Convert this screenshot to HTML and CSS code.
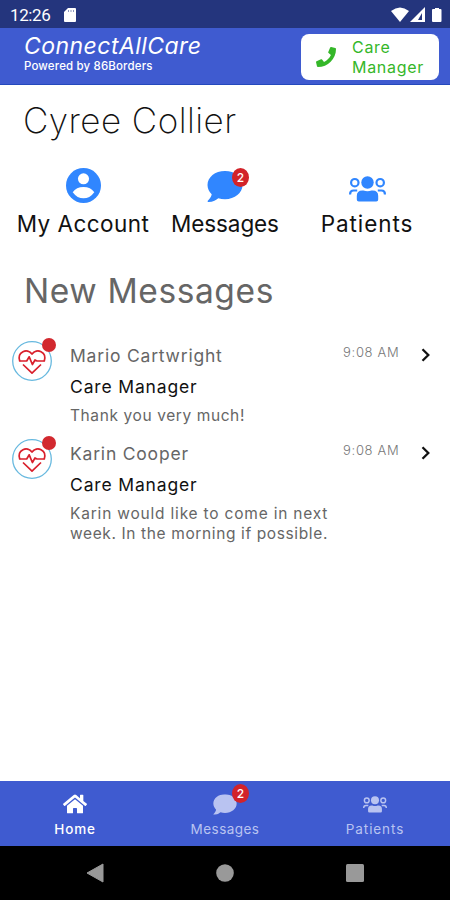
FILE: index.html
```html
<!DOCTYPE html>
<html lang="en">
<head>
<meta charset="utf-8">
<title>ConnectAllCare</title>
<link rel="stylesheet" href="styles.css">
</head>
<body>
<svg class="defs" aria-hidden="true">
  <symbol id="people" viewBox="0 0 37 26">
    <circle cx="18.5" cy="6.5" r="6.2"/>
    <path d="M7.8 25.5V20q0-5.5 5.5-5.5h1.2q4 1.6 8 0h1.2q5.5 0 5.5 5.500v3.500q0 2-2 2H9.800q-2 0-2-2z"/>
    <g fill="none" stroke="currentColor" stroke-width="2.200"><circle cx="5.800" cy="6.700" r="3.700"/><circle cx="31.200" cy="6.700" r="3.700"/><path d="M1.100 18.500v-.5q0-3.500 3.500-3.500h3.600M35.900 18.500v-.5q0-3.500-3.500-3.500h-3.600"/></g>
  </symbol>
  <symbol id="bubble" viewBox="0 0 36 31">
    <path d="M18 0C8 0 .5 6.200.5 14c0 3.600 1.600 6.700 4.200 9.200C4.200 26.500.8 29.700.8 29.700c-.4.700 0 1.300.6 1.300 4.700 0 8-2.200 9.900-3.800 2.100.7 4.300 1 6.700 1 9.800 0 17.500-6.300 17.500-14.200S27.800 0 18 0z"/>
  </symbol>
  <symbol id="heart" viewBox="0 0 40 40">
    <circle cx="20" cy="20" r="19.300" fill="#fff" stroke="#68b9df" stroke-width="1.300"/>
    <g fill="none" stroke="#d91f2b" stroke-width="1.700" stroke-linejoin="round"><path d="M7.800 20.500C4.500 10.500 15.500 6.800 20 13 24.500 6.800 35.500 10.500 32.200 20.500"/><path d="M7.500 20h7.200l2.500-4.200 3.200 7.700 2.600-4.500 2 1h7.500"/><path d="M11 23.500L20 32.200l9-8.700"/></g>
  </symbol>
</svg>

<header class="status">
  <span class="clock">12:26</span>
  <svg class="sd" viewBox="0 0 12 14"><path d="M4 0h7a1 1 0 0 1 1 1v12a1 1 0 0 1-1 1H1a1 1 0 0 1-1-1V4z" fill="#fff"/><path d="M4.500 2v2M7 2v2M9.500 2v2" stroke="#8b95bd"/></svg>
  <svg class="signals" viewBox="0 0 52 16"><path d="M0 4Q9 -3 18 4L9 15z"/><path d="M34 0v15H19z"/><path d="M31 6v7h-4z" fill="#24357d"/><path d="M44 1h4v1h1.500a1 1 0 0 1 1 1v11a1 1 0 0 1-1 1H42a1 1 0 0 1-1-1V3a1 1 0 0 1 1-1h2z"/></svg>
</header>

<div class="appbar">
  <div class="brand"><div class="logo">ConnectAllCare</div><div class="powered">Powered by 86Borders</div></div>
  <button class="call">
    <svg viewBox="0 0 512 512"><path d="M493 25L389 1c-11-3-23 3-27 14l-48 112c-4 10-1 21 7 28l61 50c-36 77-99 140-177 177l-50-61c-7-8-18-11-28-7L15 362C4 367-2 378 1 389l24 104c3 11 13 19 24 19 256 0 463-207 463-463 0-11-8-21-19-24z"/></svg>
    <span>Care<br>Manager</span>
  </button>
</div>

<main>
  <h1>Cyree Collier</h1>
  <nav class="shortcuts">
    <a class="sc account"><svg viewBox="0 0 34 34"><circle cx="17" cy="17" r="17"/><circle cx="17" cy="10.500" r="5.400" fill="#fff"/><path d="M6.500 23.500Q10 18.500 17 18.500t10.500 5Q23 29.500 17 29.500T6.500 23.500z" fill="#fff"/></svg><span>My Account</span></a>
    <a class="sc messages"><i class="icon"><svg viewBox="0 0 36 31"><use href="#bubble"/></svg><b class="badge">2</b></i><span>Messages</span></a>
    <a class="sc patients"><svg viewBox="0 0 37 26"><use href="#people"/></svg><span>Patients</span></a>
  </nav>
  <h2>New Messages</h2>
  <section class="list">
    <article class="msg">
      <div class="avatar"><svg viewBox="0 0 40 40"><use href="#heart"/></svg><i class="dot"></i></div>
      <div class="body"><div class="name">Mario Cartwright</div><div class="role">Care Manager</div><p class="short">Thank you very much!</p></div>
      <time>9:08 AM</time>
      <svg class="chev" viewBox="0 0 9 14"><path d="M1.500 1.300L7.300 7l-5.800 5.700"/></svg>
    </article>
    <article class="msg">
      <div class="avatar"><svg viewBox="0 0 40 40"><use href="#heart"/></svg><i class="dot"></i></div>
      <div class="body"><div class="name">Karin Cooper</div><div class="role">Care Manager</div><p>Karin would like to come in next<br><span class="second">week. In the morning if possible.</span></p></div>
      <time>9:08 AM</time>
      <svg class="chev" viewBox="0 0 9 14"><path d="M1.500 1.300L7.300 7l-5.800 5.700"/></svg>
    </article>
  </section>
</main>

<nav class="tabs">
  <a class="tab active"><svg class="home" viewBox="0 0 576 512"><path d="M280 149L96 300v164a16 16 0 0 0 16 16l112-1a16 16 0 0 0 16-16v-95a16 16 0 0 1 16-16h64a16 16 0 0 1 16 16v95a16 16 0 0 0 16 16l112 1a16 16 0 0 0 16-16V300L296 149a12 12 0 0 0-16 0zm292 102l-84-69V43a12 12 0 0 0-12-12h-56a12 12 0 0 0-12 12v72l-90-73a48 48 0 0 0-61 0L4 251a12 12 0 0 0-1 17l25 31a12 12 0 0 0 17 2l235-194a12 12 0 0 1 16 0l235 194a12 12 0 0 0 17-2l25-31a12 12 0 0 0-1-17z"/></svg><span>Home</span></a>
  <a class="tab"><i class="icon"><svg viewBox="0 0 36 31"><use href="#bubble"/></svg><b class="badge">2</b></i><span>Messages</span></a>
  <a class="tab"><svg class="group" viewBox="0 0 37 26"><use href="#people"/></svg><span>Patients</span></a>
</nav>
<footer class="system">
  <svg viewBox="0 0 18 20"><path d="M17 1v18L1 10z" stroke="#999" stroke-linejoin="round"/></svg>
  <svg viewBox="0 0 18 20"><circle cx="9" cy="10" r="8.800"/></svg>
  <svg viewBox="0 0 18 20"><rect y="1" width="18" height="18" rx="1.500"/></svg>
</footer>
</body>
</html>
```
FILE: styles.css
```css
* { box-sizing: border-box; }
body { margin: 0; width: 450px; height: 900px; display: flex; flex-direction: column; overflow: hidden; background: #fff; font-family: Inter, "Liberation Sans", sans-serif; color: #111; }
svg { display: block; fill: currentColor; flex: none; }
.defs { display: none; }
h1, h2, p { margin: 0; }
span, .logo, .powered, h1, h2, .name, .role, time { white-space: nowrap; }

.status { height: 28px; flex: none; background: #24357d; color: #fff; display: flex; align-items: center; padding: 1px 8px 0 10px; }
.clock { font: 400 17px/20px Roboto, sans-serif; width: 54px; letter-spacing: -.4px; }
.sd { width: 12px; height: 14px; }
.signals { width: 52px; height: 16px; margin-left: auto; margin-right: -1px; }

.appbar { height: 57px; flex: none; background: #3f5bd0; border-bottom: 1px solid #2449bd; color: #fff; display: flex; justify-content: space-between; padding: 6px 11px 0 24px; }
.logo { font-size: 23px; line-height: 25px; font-style: italic; letter-spacing: .45px; }
.powered { font-size: 11.5px; line-height: 14px; font-weight: 500; letter-spacing: .15px; }
.call { width: 138px; height: 46px; border: 0; border-radius: 8px; background: #fff; color: #35b729; display: flex; align-items: center; padding: 0 0 0 15px; gap: 16px; font: 400 16px/20px Inter, sans-serif; text-align: left; letter-spacing: .7px; }
.call svg { width: 20px; height: 20px; }

main { flex: 1; min-height: 0; }
h1 { font-size: 35px; line-height: 44px; font-weight: 200; padding: 13px 0 0 23px; letter-spacing: .45px; }
.shortcuts { display: grid; grid-template-columns: repeat(3, 142px); padding: 26px 0 0 12px; height: 99px; }
.sc { display: flex; flex-direction: column; align-items: center; justify-content: space-between; height: 71px; color: #3086ff; }
.sc > span { color: #111; font-size: 22.5px; line-height: 30px; letter-spacing: .45px; }
.messages > span { letter-spacing: -.1px; }
.patients > span { letter-spacing: .9px; }
.account svg { width: 35px; height: 35px; }
.icon { position: relative; display: block; }
.icon svg { width: 36px; height: 31px; margin-top: 3px; }
.badge { position: absolute; top: 0; right: -6px; width: 17px; height: 19px; border-radius: 50%; background: #d2232a; color: #fff; font: 500 12px/19px Inter, sans-serif; text-align: center; }
.patients svg { width: 37px; height: 26px; margin-top: 8px; }
h2 { font-size: 33.5px; line-height: 44px; font-weight: 400; color: #666; padding: 28px 0 0 24px; letter-spacing: .6px; }
.list { padding-top: 25px; }
.msg { display: flex; align-items: flex-start; height: 98px; padding: 3px 20px 0 12px; }
.avatar { position: relative; width: 40px; margin-right: 18px; }
.avatar svg { width: 40px; height: 40px; }
.dot { position: absolute; left: 30px; top: -3px; width: 14px; height: 14px; border-radius: 50%; background: #d2292f; }
.body { flex: 1; min-width: 0; }
.name { font-size: 17.5px; line-height: 24px; color: #666; margin-top: 3px; letter-spacing: .8px; }
.role { font-size: 17.5px; line-height: 24px; margin-top: 7px; letter-spacing: .85px; }
p { font-size: 15.5px; line-height: 20px; color: #666; margin-top: 7px; letter-spacing: .8px; white-space: nowrap; }
.short { letter-spacing: .6px; }
.second { letter-spacing: .62px; }
time { font-size: 13px; line-height: 16px; color: #777; font-weight: 300; letter-spacing: .7px; width: 58px; margin-top: 3px; }
.chev { width: 9px; height: 14px; margin: 7px 0 0 20px; fill: none; stroke: #111; stroke-width: 2.300; }

.tabs { flex: none; height: 65px; background: #3f5bd0; display: grid; grid-template-columns: repeat(3, 150px); }
.tab { height: 57px; padding-top: 10px; color: #b9c3f1; display: flex; flex-direction: column; align-items: center; justify-content: space-between; }
.tab > span { font-size: 13.5px; line-height: 18px; letter-spacing: .45px; }
.tab:last-child > span { letter-spacing: .9px; }
.active { color: #fff; }
.tab.active > span { font-weight: 500; letter-spacing: .8px; }
.home { width: 24px; height: 22px; margin-top: 2px; }
.tab .icon svg { width: 24px; height: 21px; margin-top: 3px; }
.tab .badge { top: -7px; right: -12px; }
.group { width: 24px; height: 17px; margin-top: 5px; }
.system { flex: none; height: 54px; background: #000; color: #999; display: flex; justify-content: space-between; align-items: center; padding: 0 86px; }
.system svg { width: 18px; height: 20px; }
```
